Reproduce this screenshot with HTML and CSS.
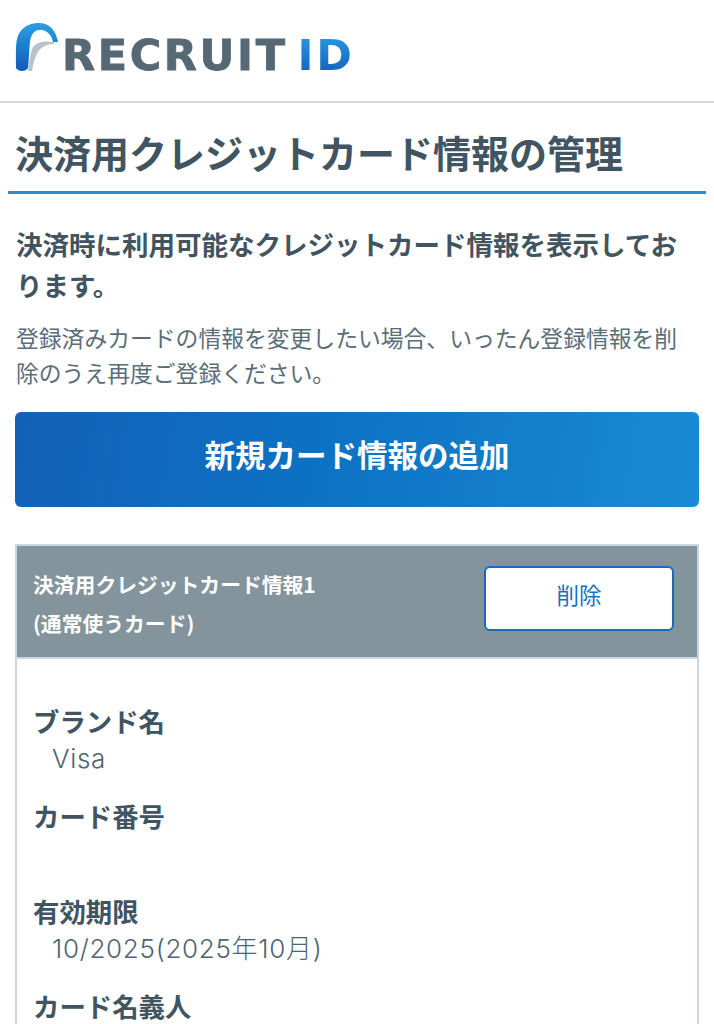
FILE: index.html
```html
<!DOCTYPE html>
<html lang="ja">
<head>
   <meta charset="UTF-8">
   <title>決済用クレジットカード情報の管理</title>
   <link rel="stylesheet" href="styles.css">
</head>
<body>

    <header class="site-header">
        <div class="logo">
            <svg class="logo-mark" width="44" height="50" viewBox="15 23 44 50">
                <defs>
                    <linearGradient id="markBlue" x1="0" y1="0" x2="0" y2="1">
                        <stop offset="0" stop-color="#2aa0e4"/>
                        <stop offset="1" stop-color="#1259b8"/>
                    </linearGradient>
                </defs>
                <path d="M28 71 C30 60 30 50 34 46 C39 41 47 41 54 42 L54 44 C47 44 41 47 38 52 C35 57 33 64 32 71 Z" fill="#b9c4c9"/>
                <path d="M16 68 C16 50 15 39 20 32 C25 25 32 23 39 23 C49 23 56 30 58 42 L53 42 C52 36 48 31 42 30 C36 29 31 33 30 42 C29 50 29 60 28 68 C26 72 18 72 16 68 Z" fill="url(#markBlue)"/>
            </svg>
            <span class="logo-text">RECRUIT</span>
            <span class="logo-id">ID</span>
        </div>
    </header>

    <main>
        <h1 class="page-title">決済用クレジットカード情報の管理</h1>

        <div class="content">
            <p class="lead">決済時に利用可能なクレジットカード情報を表示しております。</p>
            <p class="note">登録済みカードの情報を変更したい場合、いったん登録情報を削除のうえ再度ご登録ください。</p>

            <a class="add-btn" href="#">新規カード情報の追加</a>

            <section class="card">
                <div class="card-head">
                    <div class="card-title">決済用クレジットカード情報1<br>(通常使うカード)</div>
                    <button class="delete-btn">削除</button>
                </div>
                <dl class="card-body">
                    <dt>ブランド名</dt>
                    <dd>Visa</dd>
                    <dt>カード番号</dt>
                    <dd></dd>
                    <dt>有効期限</dt>
                    <dd>10/2025(2025年10月)</dd>
                    <dt>カード名義人</dt>
                </dl>
            </section>
        </div>
    </main>

</body>
</html>
```

FILE: styles.css
```css
html, body{
    height: 1024px;
    overflow: hidden;
}

body{
    font-family: "Noto Sans CJK JP", "Noto Sans", sans-serif;
    background: white;
    color: #415461;
    margin: 0;
}

.site-header{
    height: 101px;
    border-bottom: 2px solid #d5d9dc;
}

.logo{
    display: flex;
    align-items: flex-start;
    padding: 23px 0 0 15px;
    font-family: "DejaVu Sans", sans-serif;
    font-weight: bold;
    font-size: 43px;
    line-height: 50px;
    letter-spacing: 2.6px;
    filter: blur(0.5px);
}

.logo-mark{
    flex: none;
    margin-right: 3px;
}

.logo-text{
    color: #566874;
    margin-top: 7px;
    -webkit-text-stroke: 0.8px #566874;
}

.logo-id{
    margin: 7px 0 0 10px;
    background: linear-gradient(#2aa0e4, #1259b8);
    -webkit-background-clip: text;
    background-clip: text;
    color: transparent;
}

.page-title{
    margin: 0 8px;
    padding: 22px 7px 13px;
    font-size: 38px;
    line-height: 53px;
    font-weight: bold;
    border-bottom: 3px solid #2a8bd6;
}

.content{
    padding: 0 15px;
}

.lead{
    margin: 0;
    padding: 29px 0 0 1px;
    font-size: 26.5px;
    line-height: 41px;
    font-weight: bold;
}

.note{
    margin: 15px 0 0;
    padding: 0 6px 0 1px;
    font-size: 22.8px;
    line-height: 35px;
    color: #5b6d79;
}

.add-btn{
    display: block;
    margin-top: 22px;
    height: 95px;
    line-height: 84px;
    background: linear-gradient(100deg, #1460b8 0%, #0c72c4 45%, #1a8ad4 100%);
    color: white;
    text-align: center;
    text-decoration: none;
    font-size: 30.5px;
    font-weight: bold;
    border-radius: 6px;
}

.card{
    margin-top: 37px;
    border: 2px solid #c9d5e0;
    border-bottom: 0;
}

.card-head{
    display: flex;
    justify-content: space-between;
    align-items: center;
    height: 111px;
    padding: 0 23px 0 16px;
    background: #84949c;
    border-bottom: 2px solid #c9d5e0;
}

.card-title{
    padding-top: 4px;
    color: white;
    font-size: 20.8px;
    line-height: 39px;
    font-weight: bold;
}

.delete-btn{
    width: 190px;
    height: 65px;
    margin-top: -6px;
    padding-bottom: 10px;
    background: white;
    color: #1a6fc4;
    border: 2px solid #1a6ac0;
    border-radius: 6px;
    font-family: inherit;
    font-size: 22.5px;
}

.card-body{
    margin: 0;
    padding: 43px 16px 0;
}

.card-body dt{
    font-size: 26.4px;
    line-height: 37px;
    font-weight: bold;
}

.card-body dd{
    margin: 0 0 20px;
    padding: 1px 0 0 19px;
    min-height: 37px;
    font-family: Inter, "Noto Sans CJK JP", sans-serif;
    font-weight: 300;
    font-size: 26px;
    letter-spacing: 0.7px;
    line-height: 37px;
    color: #4f6472;
}
```
